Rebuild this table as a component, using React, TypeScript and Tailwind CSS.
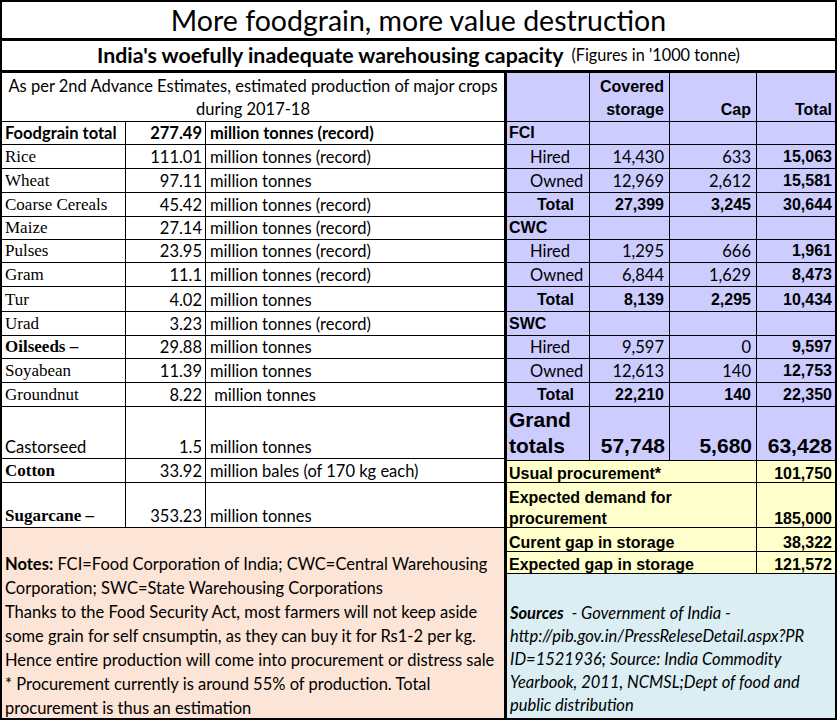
import React from "react";

const CAL = "font-['Lato',sans-serif]";
const ARI = "font-['Liberation_Sans',Arial,sans-serif]";
const TMS = "font-['Liberation_Serif','Times_New_Roman',serif]";

type LRow = {
  label: string;
  labelCls: string;
  num: string;
  text: string;
  bold?: boolean;
  h: string;
};

const leftRows: LRow[] = [
  { label: "Foodgrain total", labelCls: `${CAL} font-bold text-[16.5px]`, num: "277.49", text: "million tonnes (record)", bold: true, h: "h-[23px]" },
  { label: "Rice", labelCls: `${TMS} text-[17px]`, num: "111.01", text: "million tonnes (record)", h: "h-[24px]" },
  { label: "Wheat", labelCls: `${TMS} text-[17px]`, num: "97.11", text: "million tonnes", h: "h-[24px]" },
  { label: "Coarse Cereals", labelCls: `${TMS} text-[17px]`, num: "45.42", text: "million tonnes (record)", h: "h-[24px]" },
  { label: "Maize", labelCls: `${TMS} text-[17px]`, num: "27.14", text: "million tonnes (record)", h: "h-[23px]" },
  { label: "Pulses", labelCls: `${TMS} text-[17px]`, num: "23.95", text: "million tonnes (record)", h: "h-[23px]" },
  { label: "Gram", labelCls: `${TMS} text-[17px]`, num: "11.1", text: "million tonnes (record)", h: "h-[24px]" },
  { label: "Tur", labelCls: `${TMS} text-[17px]`, num: "4.02", text: "million tonnes", h: "h-[25px]" },
  { label: "Urad", labelCls: `${TMS} text-[17px]`, num: "3.23", text: "million tonnes (record)", h: "h-[24px]" },
  { label: "Oilseeds –", labelCls: `${TMS} font-bold text-[17px]`, num: "29.88", text: "million tonnes", h: "h-[23px]" },
  { label: "Soyabean", labelCls: `${TMS} text-[17px]`, num: "11.39", text: "million tonnes", h: "h-[24px]" },
  { label: "Groundnut", labelCls: `${TMS} text-[17px]`, num: "8.22", text: "\u00a0million tonnes", h: "h-[24px]" },
  { label: "Castorseed", labelCls: `${CAL} text-[16.5px]`, num: "1.5", text: "million tonnes", h: "h-[52px]" },
  { label: "Cotton", labelCls: `${TMS} font-bold text-[17px]`, num: "33.92", text: "million bales (of 170 kg each)", h: "h-[24px]" },
  { label: "Sugarcane –", labelCls: `${TMS} font-bold text-[17px]`, num: "353.23", text: "million tonnes", h: "h-[45px]" },
];

type RRow =
  | { kind: "group"; name: string; h: string }
  | { kind: "item"; name: string; a: string; b: string; c: string; h: string }
  | { kind: "total"; a: string; b: string; c: string; h: string };

const rightRows: RRow[] = [
  { kind: "group", name: "FCI", h: "h-[23px]" },
  { kind: "item", name: "Hired", a: "14,430", b: "633", c: "15,063", h: "h-[24px]" },
  { kind: "item", name: "Owned", a: "12,969", b: "2,612", c: "15,581", h: "h-[24px]" },
  { kind: "total", a: "27,399", b: "3,245", c: "30,644", h: "h-[24px]" },
  { kind: "group", name: "CWC", h: "h-[23px]" },
  { kind: "item", name: "Hired", a: "1,295", b: "666", c: "1,961", h: "h-[23px]" },
  { kind: "item", name: "Owned", a: "6,844", b: "1,629", c: "8,473", h: "h-[24px]" },
  { kind: "total", a: "8,139", b: "2,295", c: "10,434", h: "h-[25px]" },
  { kind: "group", name: "SWC", h: "h-[24px]" },
  { kind: "item", name: "Hired", a: "9,597", b: "0", c: "9,597", h: "h-[23px]" },
  { kind: "item", name: "Owned", a: "12,613", b: "140", c: "12,753", h: "h-[24px]" },
  { kind: "total", a: "22,210", b: "140", c: "22,350", h: "h-[24px]" },
];

function LeftRow({ r }: { r: LRow }) {
  const txt = r.bold ? `${CAL} font-bold` : CAL;
  return (
    <div className={`flex ${r.h} border-b border-black text-[16.5px] leading-[20px]`}>
      <div className={`w-[124px] border-r border-black flex items-end pl-[3px] pb-[1px] whitespace-nowrap ${r.labelCls}`}>
        {r.label}
      </div>
      <div className={`w-[80px] border-r border-black flex items-end justify-end pr-[3px] pb-[1px] ${txt}`}>{r.num}</div>
      <div className={`flex-1 flex items-end pl-[4px] pb-[1px] whitespace-nowrap ${txt}`}>{r.text}</div>
    </div>
  );
}

function RightRow({ r }: { r: RRow }) {
  const base = `flex ${r.h} border-b border-black leading-[20px]`;
  const c1 = "w-[83px] border-r border-black flex items-end pb-[1px]";
  const c2 = "w-[80px] border-r border-black flex items-end justify-end pr-[5px] pb-[1px]";
  const c3 = "w-[87px] border-r border-black flex items-end justify-end pr-[5px] pb-[1px]";
  const c4 = "flex-1 flex items-end justify-end pr-[3px] pb-[1px]";
  if (r.kind === "group") {
    return (
      <div className={base}>
        <div className={`${c1} pl-[2px] ${ARI} font-bold text-[16px]`}>{r.name}</div>
        <div className={c2}></div>
        <div className={c3}></div>
        <div className={c4}></div>
      </div>
    );
  }
  if (r.kind === "item") {
    return (
      <div className={base}>
        <div className={`${c1} pl-[23px] ${CAL} text-[16.5px]`}>{r.name}</div>
        <div className={`${c2} ${CAL} text-[16.5px]`}>{r.a}</div>
        <div className={`${c3} ${CAL} text-[16.5px]`}>{r.b}</div>
        <div className={`${c4} ${ARI} font-bold text-[16px]`}>{r.c}</div>
      </div>
    );
  }
  return (
    <div className={`${base} ${ARI} font-bold text-[16px]`}>
      <div className={`${c1} pl-[30px]`}>Total</div>
      <div className={c2}>{r.a}</div>
      <div className={c3}>{r.b}</div>
      <div className={c4}>{r.c}</div>
    </div>
  );
}

function YellowRow({ h, label, value }: { h: string; label: React.ReactNode; value: string }) {
  return (
    <div className={`flex ${h} border-b border-black bg-[#ffffcc] ${ARI} font-bold text-[16px] leading-[21px]`}>
      <div className="w-[250px] border-r border-black flex items-end pl-[2px] -mb-[2px] whitespace-nowrap">{label}</div>
      <div className="flex-1 flex items-end justify-end pr-[3px] -mb-[2px]">{value}</div>
    </div>
  );
}

export default function App() {
  return (
    <div className="w-[837px] h-[720px] bg-white text-black">
      <div className="w-[837px] h-[720px] border-2 border-black flex flex-col">
        <div className={`h-[39px] border-b-[3px] border-black flex items-center justify-center text-[28.5px] ${CAL}`}>
          More foodgrain, more value destruction
        </div>
        <div className={`h-[32px] border-b-[3px] border-black flex items-center justify-center ${CAL} whitespace-nowrap`}>
          <span className="font-bold text-[21.3px]">India's woefully inadequate warehousing capacity</span>
          <span className="text-[16.3px] ml-[8px]">(Figures in '1000 tonne)</span>
        </div>
        <div className="flex flex-1">
          {/* left column */}
          <div className="w-[505px] border-r-[3px] border-black flex flex-col">
            <div className={`h-[49px] border-b border-black flex flex-col items-center justify-end ${CAL} text-[16.5px] leading-[23px] whitespace-nowrap`}>
              <div>As per 2nd Advance Estimates, estimated production of major crops</div>
              <div>during 2017-18</div>
            </div>
            {leftRows.map((r, i) => (
              <LeftRow key={i} r={r} />
            ))}
            <div className={`flex-1 bg-[#fce4d6] flex flex-col justify-end pl-[3px] ${CAL} text-[16.5px] leading-[24px] whitespace-nowrap`}>
              <div className="-mb-[2px]">
                <div>
                  <span className="font-bold">Notes:</span> FCI=Food Corporation of India; CWC=Central Warehousing
                </div>
                <div>Corporation; SWC=State Warehousing Corporations</div>
                <div>Thanks to the Food Security Act, most farmers will not keep aside</div>
                <div>some grain for self cnsumptin, as they can buy it for Rs1-2 per kg.</div>
                <div>Hence entire production will come into procurement or distress sale</div>
                <div>* Procurement currently is around 55% of production. Total</div>
                <div>procurement is thus an estimation</div>
              </div>
            </div>
          </div>
          {/* right column */}
          <div className="flex-1 flex flex-col">
            <div className="bg-[#ccccff] flex flex-col">
              <div className={`flex h-[49px] border-b border-black ${ARI} font-bold text-[16px] leading-[23px]`}>
                <div className="w-[83px] border-r border-black"></div>
                <div className="w-[80px] border-r border-black flex flex-col items-end justify-end pr-[5px]">
                  <div>Covered</div>
                  <div>storage</div>
                </div>
                <div className="w-[87px] border-r border-black flex items-end justify-end pr-[5px]">Cap</div>
                <div className="flex-1 flex items-end justify-end pr-[3px]">Total</div>
              </div>
              {rightRows.map((r, i) => (
                <RightRow key={i} r={r} />
              ))}
              <div className={`flex h-[54px] border-b border-black ${ARI} font-bold text-[21px] leading-[26px]`}>
                <div className="w-[83px] border-r border-black flex flex-col justify-end pl-[2px] pb-[1px]">
                  <div>Grand</div>
                  <div>totals</div>
                </div>
                <div className="w-[80px] border-r border-black flex items-end justify-end pr-[4px] pb-[1px]">57,748</div>
                <div className="w-[87px] border-r border-black flex items-end justify-end pr-[4px] pb-[1px]">5,680</div>
                <div className="flex-1 flex items-end justify-end pr-[3px] pb-[1px]">63,428</div>
              </div>
            </div>
            <YellowRow h="h-[22px]" label="Usual procurement*" value="101,750" />
            <YellowRow
              h="h-[45px]"
              label={
                <div className="flex flex-col">
                  <div>Expected demand for</div>
                  <div>procurement</div>
                </div>
              }
              value="185,000"
            />
            <YellowRow h="h-[24px]" label="Curent gap in storage" value="38,322" />
            <YellowRow h="h-[22px]" label="Expected gap in storage" value="121,572" />
            <div className={`flex-1 bg-[#daeef3] flex flex-col justify-end pl-[3px] pb-[1px] ${CAL} italic text-[16.5px] leading-[23px] whitespace-nowrap`}>
              <div>
                <span className="font-bold">Sources</span> &nbsp;- Government of India -
              </div>
              <div>http://pib.gov.in/PressReleseDetail.aspx?PR</div>
              <div>ID=1521936; Source: India Commodity</div>
              <div>Yearbook, 2011, NCMSL;Dept of food and</div>
              <div>public distribution</div>
            </div>
          </div>
        </div>
      </div>
    </div>
  );
}
